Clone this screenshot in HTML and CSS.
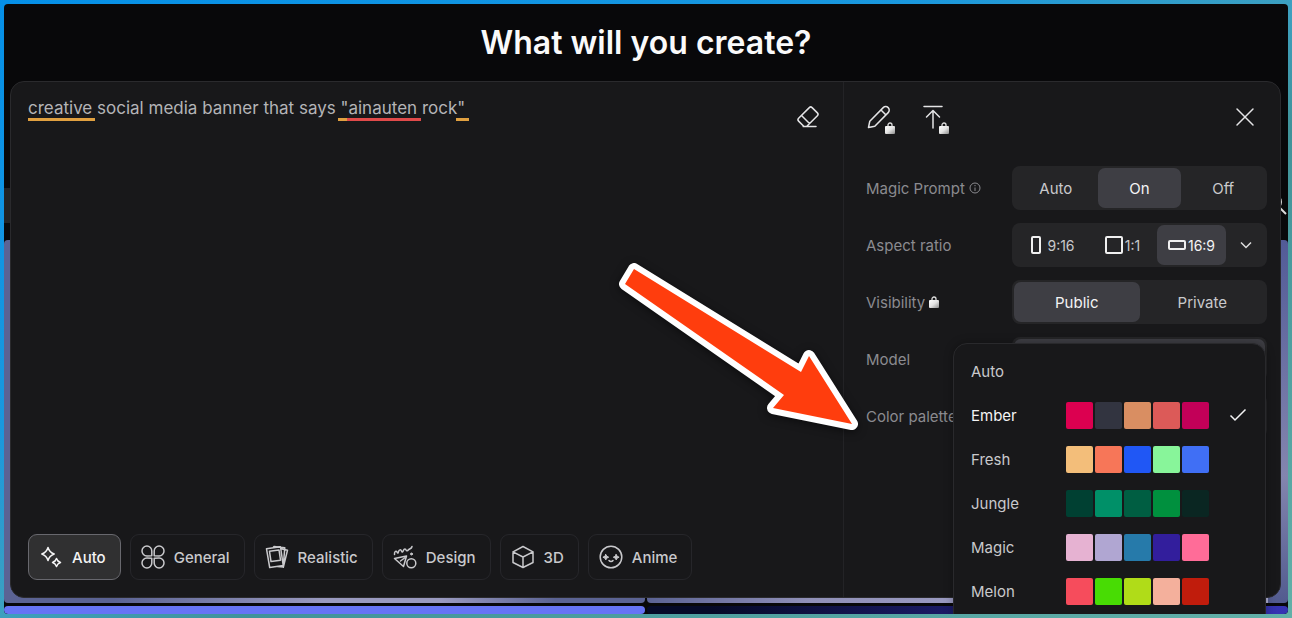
FILE: index.html
```html
<!DOCTYPE html>
<html lang="en">
<head>
    <meta charset="UTF-8">
    <title>What will you create?</title>
    <link rel="stylesheet" href="styles.css">
</head>
<body>
    <div class="window">
        <!-- gallery behind the composer -->
        <div class="backdrop">
            <div class="filters">
                <svg class="search" viewBox="0 0 24 24"><circle cx="10" cy="10" r="7"/><path d="M15 15l7 7"/></svg>
            </div>
            <div class="gallery">
                <div class="tile tile1"></div>
                <div class="tile tile2"></div>
                <div class="tile tile3"></div>
                <div class="tile tile4"></div>
            </div>
        </div>

        <h1>What will you create?</h1>

        <div class="composer">
            <div class="prompt">
                <div class="promptTop">
                    <div class="promptField">
                        <textarea aria-label="Prompt" spellcheck="false">creative social media banner that says "ainauten rock"</textarea>
                        <div class="marks">
                            <i class="mark mark1"></i>
                            <i class="mark mark2"></i>
                            <i class="mark mark3"></i>
                            <i class="mark mark4"></i>
                        </div>
                    </div>
                    <button class="iconBtn" aria-label="Clear prompt">
                        <svg class="icon" viewBox="0 0 24 24"><path d="M8 21.500l-5.400-5.400a2 2 0 0 1 0-2.800L13.300 2.600a2 2 0 0 1 2.800 0l5.300 5.300a2 2 0 0 1 0 2.800L10.600 21.500M5.500 10.500l8 8M7 21.500h13"/></svg>
                    </button>
                </div>
                <div class="styles">
                    <button class="style active">
                        <svg class="icon" viewBox="0 0 24 24"><path d="M9 2.500c1 3.700 2.500 5.200 6.200 6.500-3.700 1.300-5.200 2.800-6.200 6.500-1-3.700-2.500-5.200-6.200-6.500C6.500 7.700 8 6.200 9 2.500zM17.500 13.500c.7 2.300 1.700 3.300 4 4-2.300.7-3.300 1.700-4 4-.7-2.300-1.700-3.300-4-4 2.300-.7 3.300-1.700 4-4z"/></svg>
                        Auto
                    </button>
                    <button class="style">
                        <svg class="icon" viewBox="0 0 24 24"><path d="M10.800 10.800V6a4.900 4.900 0 1 0-4.900 4.900zM13.200 10.800V6a4.900 4.900 0 1 1 4.900 4.900zM10.800 13.200V18a4.900 4.900 0 1 1-4.900-4.900zM13.200 13.200V18a4.900 4.900 0 1 0 4.900-4.900z"/></svg>
                        General
                    </button>
                    <button class="style">
                        <svg class="icon" viewBox="0 0 24 24"><path d="M1.500 3.800l14-2 2.700 18.700-13.500 2zM4.500 6.300l9.500-1.400 1.500 10.300-9.500 1.400zM8 2.700l1-1.200 10.800 1.300-1.600 19.200-6-.5M16 3.800l6.500 1.500-4.200 17"/></svg>
                        Realistic
                    </button>
                    <button class="style">
                        <svg class="icon" viewBox="0 0 24 24"><path d="M1.500 9.500c-.3-3 1.500-4.300 2.500-2.500s1.200 1 1.500-.3c.5-2 2.300-2.600 3-.7s1.500.8 2-.7c.6-1.800 2.300-1.500 2.600-.3.400 1.300 1.500 1 2.400-.2C17 3.300 18.500 4 19 1.500M1.500 13.500l12-2.500-3 10.500zM7.500 16l4-3"/><circle cx="18.300" cy="18.300" r="4.500"/><circle class="dot" cx="18.500" cy="9" r="1"/></svg>
                        Design
                    </button>
                    <button class="style">
                        <svg class="icon" viewBox="0 0 24 24"><path d="M12 1.500l10 5.300v10.700l-10 5-10-5V6.800zM2 6.800l10 5.200 10-5.200M12 12v10.500"/></svg>
                        3D
                    </button>
                    <button class="style">
                        <svg class="icon" viewBox="0 0 24 24"><circle cx="12" cy="12" r="10.800"/><path d="M10 15.500c1 1.200 3 1.200 4 0"/><path class="dot" d="M6.800 9.500l1 1.800 1.900.9-1.900.9-1 1.800-1-1.800-1.900-.9 1.900-.9zM17.200 9.500l1 1.800 1.900.9-1.900.9-1 1.800-1-1.800-1.900-.9 1.900-.9z"/></svg>
                        Anime
                    </button>
                </div>
            </div>

            <div class="settings">
                <svg class="defs" width="0" height="0">
                    <defs>
                        <linearGradient id="silver" x1="0" y1="0" x2="1" y2="1">
                            <stop offset="0" stop-color="#fff"/>
                            <stop offset=".5" stop-color="#e4e4e4"/>
                            <stop offset="1" stop-color="#8c8c8c"/>
                        </linearGradient>
                        <symbol id="lock" viewBox="0 0 10 12">
                            <path d="M3 5V3a2 2 0 0 1 4 0v2" fill="none" stroke="#ddd" stroke-width="1.300"/>
                            <rect y="4" width="10" height="8" rx="1" fill="url(#silver)"/>
                        </symbol>
                    </defs>
                </svg>
                <div class="tools">
                    <button class="iconBtn" aria-label="Edit">
                        <svg class="icon" viewBox="0 0 24 24"><path d="M1.500 22.500l1.300-6.300L16.200 2.600a3.500 3.500 0 0 1 5 5L7.800 21.200zM14 5l5 5"/></svg>
                        <svg class="lock"><use href="#lock"/></svg>
                    </button>
                    <button class="iconBtn" aria-label="Upload">
                        <svg class="icon" viewBox="0 0 24 24"><path d="M3 1.500h18M12 23V5.500M5.500 12L12 5.500l6.500 6.500"/></svg>
                        <svg class="lock"><use href="#lock"/></svg>
                    </button>
                    <button class="iconBtn close" aria-label="Close">
                        <svg class="icon" viewBox="0 0 24 24"><path d="M4 4l16 16M20 4L4 20"/></svg>
                    </button>
                </div>

                <div class="row">
                    <span class="label">Magic Prompt
                        <svg class="info" viewBox="0 0 12 12"><circle cx="6" cy="6" r="5"/><path d="M6 5.500V9M6 3v1.200"/></svg>
                    </span>
                    <div class="segment">
                        <button>Auto</button>
                        <button class="on">On</button>
                        <button>Off</button>
                    </div>
                </div>
                <div class="row">
                    <span class="label">Aspect ratio</span>
                    <div class="segment ratio">
                        <button><svg class="shape" viewBox="0 0 18 18"><rect x="5" y="1" width="8" height="16" rx="1"/></svg>9:16</button>
                        <button><svg class="shape" viewBox="0 0 18 18"><rect x="1" y="1" width="16" height="16" rx="1"/></svg>1:1</button>
                        <button class="on"><svg class="shape" viewBox="0 0 18 18"><rect x="1" y="5" width="16" height="8" rx="1"/></svg>16:9</button>
                        <button aria-label="More ratios"><svg class="arrowDown" viewBox="0 0 12 12"><path d="M1 3.500l5 5 5-5"/></svg></button>
                    </div>
                </div>
                <div class="row">
                    <span class="label">Visibility <svg class="lock"><use href="#lock"/></svg></span>
                    <div class="segment">
                        <button class="on">Public</button>
                        <button>Private</button>
                    </div>
                </div>
                <div class="row">
                    <span class="label">Model</span>
                    <div class="segment"><button class="on" aria-label="Model"></button></div>
                </div>
                <div class="row">
                    <span class="label">Color palette</span>
                    <div class="segment"><button aria-label="Color palette"></button></div>
                </div>
            </div>
        </div>

        <div class="palettes">
            <button class="palette">Auto</button>
            <button class="palette selected">Ember
                <span class="colors ember"><i></i><i></i><i></i><i></i><i></i></span>
                <svg class="check" viewBox="0 0 18 14"><path d="M1.500 7.500l4.500 4.500L16.500 1.500"/></svg>
            </button>
            <button class="palette">Fresh
                <span class="colors fresh"><i></i><i></i><i></i><i></i><i></i></span>
            </button>
            <button class="palette">Jungle
                <span class="colors jungle"><i></i><i></i><i></i><i></i><i></i></span>
            </button>
            <button class="palette">Magic
                <span class="colors magic"><i></i><i></i><i></i><i></i><i></i></span>
            </button>
            <button class="palette">Melon
                <span class="colors melon"><i></i><i></i><i></i><i></i><i></i></span>
            </button>
        </div>

        <svg class="pointer" viewBox="0 0 250 180">
            <path d="M19 11L10 26l159 111-11 13 79 16-43-68-8 16z"/>
        </svg>
    </div>
</body>
</html>
```
FILE: styles.css
```css
*{
    box-sizing: border-box;
    margin: 0;
    padding: 0;
}
body{
    display: flex;
    min-height: 100vh;
    padding: 4px;
    background: linear-gradient(155deg, #0590e8, #1a98de 35%, #3da0c0 50%, #40939a 60%, #62b0a8);
    font-family: Inter, "Liberation Sans", sans-serif;
    color: #c9c9cc;
}
button{
    border: 0;
    background: none;
    color: inherit;
    font: inherit;
    cursor: pointer;
}
.window{
    position: relative;
    display: flex;
    flex: 1;
    flex-direction: column;
    overflow: hidden;
    border-radius: 4px;
    background: #08080a;
}

/* backdrop */
.backdrop{
    position: absolute;
    inset: 0;
    display: flex;
    flex-direction: column;
    padding-top: 184px;
}
.filters{
    display: flex;
    justify-content: flex-end;
    height: 35px;
    margin-bottom: 17px;
    background: linear-gradient(90deg, #222224 50%, #08080a 50%);
}
.search{
    width: 24px;
    height: 24px;
    margin-top: 4px;
    fill: none;
    stroke: #ddd;
    stroke-width: 2;
}
.gallery{
    display: grid;
    flex: 1;
    grid-template-columns: 1fr 1fr;
    grid-template-rows: 1fr 8px;
    gap: 3px 2px;
}
.tile{
    border-radius: 4px;
}
.tile1{
    background: linear-gradient(90deg, #5b6394 17%, #9a9ac0 50%, #9a9ac0 68%, #5b6394 86%);
}
.tile2{
    background: linear-gradient(180deg, #525b97, #8385ae 65%, #525b8f) right / 20px 100% no-repeat,
        linear-gradient(90deg, #5b6394, #9090b8 25%, #b0b0d4);
}
.tile3{
    background: #6674f5;
}
.tile4{
    background: linear-gradient(90deg, #050a28 10%, #1c1c6a 50%, #3634b4);
}

h1{
    position: relative;
    height: 77px;
    color: #fafafa;
    font-size: 32px;
    font-weight: 600;
    line-height: 78px;
    text-align: center;
}

/* composer */
.composer{
    position: relative;
    display: grid;
    flex: 1;
    grid-template-columns: 1fr 437px;
    margin: 0 7px 16px 6px;
    border: 1px solid #2a2a2d;
    border-radius: 14px;
    background: #18181a;
}
.prompt{
    display: flex;
    flex-direction: column;
    padding: 12px 17px 17px;
}
.promptTop{
    display: flex;
    flex: 1;
    gap: 16px;
}
.promptField{
    position: relative;
    flex: 1;
}
textarea{
    display: block;
    width: 100%;
    height: 100%;
    border: 0;
    outline: 0;
    resize: none;
    background: none;
    color: #b4b4b7;
    font-family: inherit;
    font-size: 17px;
    line-height: 28px;
}
/* spell check marks under the words */
.marks{
    position: absolute;
    top: 24px;
    left: 0;
    display: flex;
    pointer-events: none;
}
.mark{
    height: 3px;
    background: #e0a040;
}
.mark1{
    width: 67px;
}
.mark2{
    width: 9px;
    margin-left: 243px;
}
.mark3{
    width: 74px;
    background: #e04a4a;
}
.mark4{
    width: 13px;
    margin-left: 35px;
}
.icon{
    display: block;
    width: 24px;
    height: 24px;
    fill: none;
    stroke: currentColor;
    stroke-width: 1.5;
    stroke-linejoin: round;
    stroke-linecap: round;
}
.dot{
    fill: currentColor;
    stroke-width: 1;
}
.iconBtn{
    position: relative;
    align-self: flex-start;
    padding: 11px 6px;
    color: #e4e4e6;
}
.styles{
    display: flex;
    flex-wrap: wrap;
    gap: 9px;
}
.style{
    display: flex;
    align-items: center;
    gap: 9px;
    height: 46px;
    padding: 0 14px 0 10px;
    border: 1px solid #26262a;
    border-radius: 9px;
    font-size: 15px;
    font-weight: 500;
}
.style.active{
    border-color: #68686e;
    background: #303031;
    color: #f4f4f5;
}

/* settings */
.settings{
    display: flex;
    flex-direction: column;
    gap: 13px;
    padding: 12px 13px 12px 22px;
    border-left: 1px solid #232326;
}
.defs{
    position: absolute;
}
.tools{
    display: flex;
    gap: 18px;
    margin: 0 4px 13px -5px;
}
.lock{
    width: 10px;
    height: 12px;
}
.tools .lock{
    position: absolute;
    right: 2px;
    bottom: 6px;
}
.close{
    margin-left: auto;
}
.row{
    display: flex;
    align-items: center;
    height: 44px;
    font-size: 15px;
}
.label{
    flex: 1;
    color: #8b8b90;
}
.info{
    width: 12px;
    height: 12px;
    fill: none;
    stroke: #8b8b90;
}
.segment{
    display: grid;
    grid-auto-columns: 1fr;
    grid-auto-flow: column;
    width: 255px;
    height: 44px;
    padding: 2px;
    border-radius: 8px;
    background: #252527;
}
.segment button{
    border-radius: 7px;
    font-size: 15px;
}
.segment .on{
    background: #3e3e44;
    color: #f4f4f5;
}
.ratio{
    grid-template-columns: 1fr 69px 69px 39px;
}
.segment.ratio button{
    display: flex;
    align-items: center;
    justify-content: center;
    gap: 2px;
    font-size: 14px;
}
.shape{
    width: 18px;
    height: 18px;
    fill: none;
    stroke: #f0f0f0;
    stroke-width: 2;
}
.arrowDown{
    width: 12px;
    height: 12px;
    fill: none;
    stroke: #ddd;
    stroke-width: 1.5;
}

/* palette menu, cut off by the window */
.palettes{
    position: absolute;
    top: 339px;
    right: 22px;
    bottom: -16px;
    width: 313px;
    padding-top: 5px;
    border: 1px solid #29292c;
    border-radius: 14px;
    background: #18181a;
    box-shadow: 0 0 10px rgba(0, 0, 0, .3);
}
.palette{
    display: grid;
    grid-template-columns: 95px 143px 1fr;
    align-items: center;
    width: 100%;
    height: 44px;
    padding: 0 18px 0 17px;
    font-size: 15px;
    text-align: left;
}
.selected{
    color: #f4f4f5;
}
.colors{
    display: flex;
    gap: 2px;
}
.colors i{
    width: 27px;
    height: 27px;
    border-radius: 2px;
}
.check{
    justify-self: end;
    width: 18px;
    height: 14px;
    fill: none;
    stroke: #f4f4f5;
    stroke-width: 1.5;
}
.ember i:nth-child(1){ background: #dc0050; }
.ember i:nth-child(2){ background: #323440; }
.ember i:nth-child(3){ background: #d98e62; }
.ember i:nth-child(4){ background: #dc5a58; }
.ember i:nth-child(5){ background: #c20058; }
.fresh i:nth-child(1){ background: #f3be7a; }
.fresh i:nth-child(2){ background: #f77658; }
.fresh i:nth-child(3){ background: #2057f5; }
.fresh i:nth-child(4){ background: #88f59a; }
.fresh i:nth-child(5){ background: #406ff5; }
.jungle i:nth-child(1){ background: #004032; }
.jungle i:nth-child(2){ background: #009068; }
.jungle i:nth-child(3){ background: #005e42; }
.jungle i:nth-child(4){ background: #00903e; }
.jungle i:nth-child(5){ background: #0a2622; }
.magic i:nth-child(1){ background: #e6b2d2; }
.magic i:nth-child(2){ background: #b0a6d2; }
.magic i:nth-child(3){ background: #267aaa; }
.magic i:nth-child(4){ background: #321e9c; }
.magic i:nth-child(5){ background: #ff6c98; }
.melon i:nth-child(1){ background: #f64c5c; }
.melon i:nth-child(2){ background: #48dc04; }
.melon i:nth-child(3){ background: #b0dc18; }
.melon i:nth-child(4){ background: #f4b09c; }
.melon i:nth-child(5){ background: #c01c0c; }

.pointer{
    position: absolute;
    top: 254px;
    right: 423px;
    width: 250px;
    height: 180px;
    overflow: visible;
    fill: #ff3d0d;
    stroke: #fff;
    stroke-width: 12;
    stroke-linejoin: round;
    paint-order: stroke;
    filter: drop-shadow(0 2px 4px rgba(0, 0, 0, .5));
    pointer-events: none;
}
```
